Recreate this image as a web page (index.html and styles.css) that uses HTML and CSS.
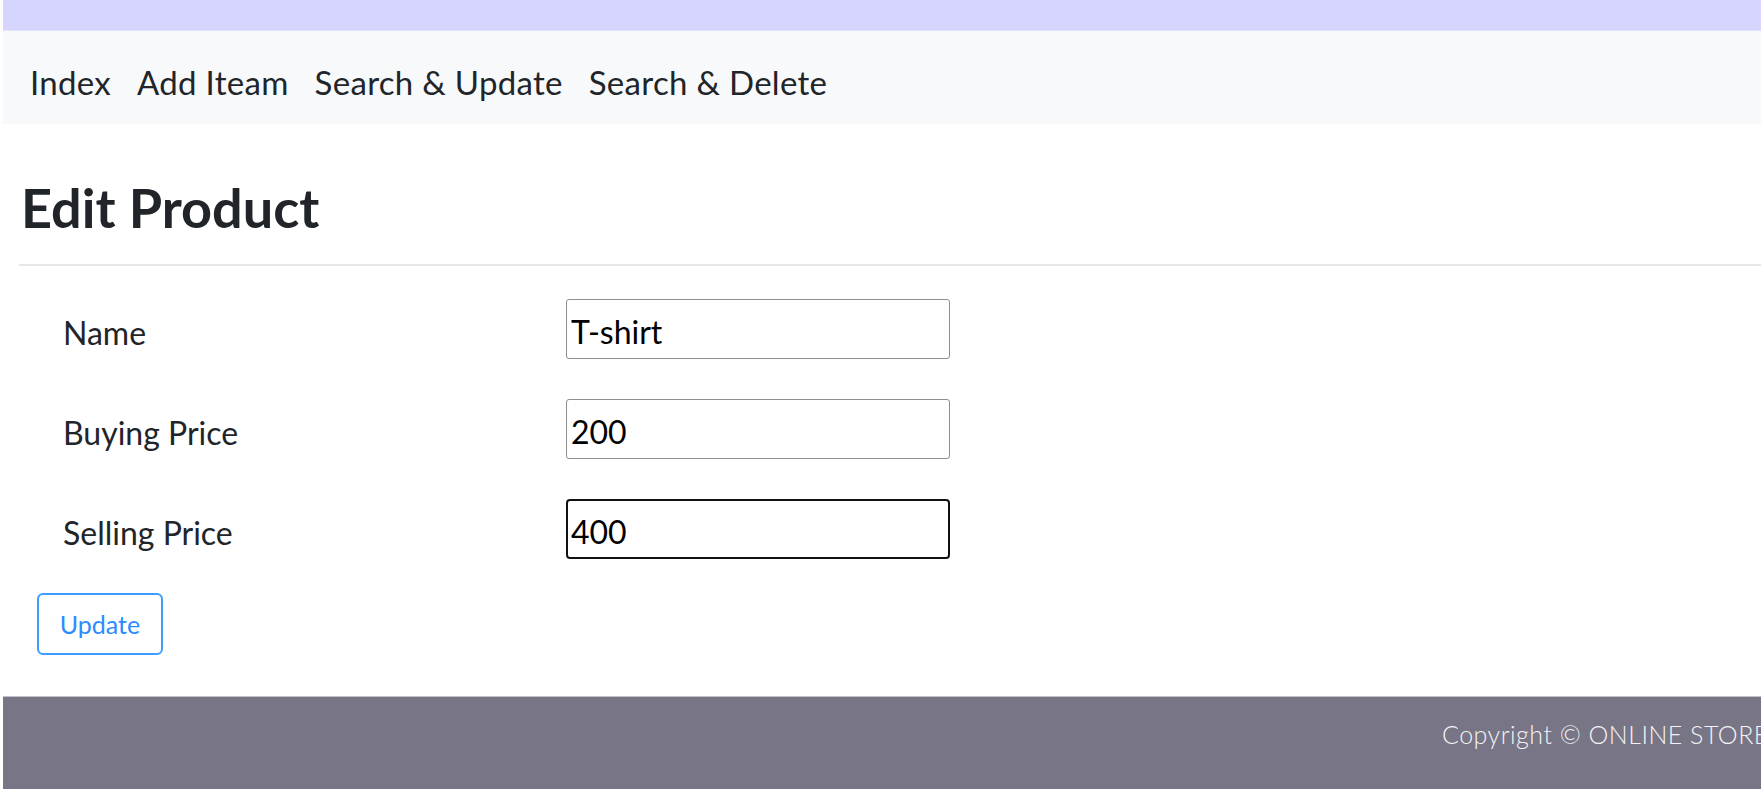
FILE: index.html
```html
<!DOCTYPE html>
<html lang="en">
<head>
<meta charset="utf-8">
<title>Edit Product</title>
<link rel="stylesheet" href="styles.css">
</head>
<body>
<div class="page">
  <div class="topband"></div>
  <nav class="navbar">
    <a class="nav-link" href="#">Index</a>
    <a class="nav-link" href="#">Add Iteam</a>
    <a class="nav-link" href="#">Search &amp; Update</a>
    <a class="nav-link" href="#">Search &amp; Delete</a>
  </nav>
  <main class="content">
    <h1 class="title">Edit Product</h1>
    <hr class="divider">
    <form class="form">
      <div class="row">
        <label class="label">Name</label>
        <input class="field" type="text" value="T-shirt">
      </div>
      <div class="row">
        <label class="label">Buying Price</label>
        <input class="field" type="text" value="200">
      </div>
      <div class="row">
        <label class="label">Selling Price</label>
        <input class="field focused" type="text" value="400">
      </div>
      <button class="btn" type="button">Update</button>
    </form>
  </main>
  <footer class="footer">
    <span class="copy">Copyright © ONLINE STORE</span>
  </footer>
</div>
</body>
</html>
```
FILE: styles.css
```css
html, body {
  margin: 0;
  padding: 0;
  overflow: hidden;
  background: #ffffff;
}
body {
  font-family: "Lato", "Noto Sans", sans-serif;
  color: #212529;
}
.page {
  margin-left: 3px;
  height: 789px;
  display: flex;
  flex-direction: column;
}
.topband {
  height: 30px;
  background: #d5d5fd;
  border-bottom: 1px solid #e4e4fb;
}
.navbar {
  height: 93px;
  box-sizing: border-box;
  background: #f8f9fa;
  display: flex;
  align-items: center;
  padding-left: 27px;
  padding-top: 9px;
  gap: 26px;
}
.nav-link {
  font-size: 33px;
  color: #212529;
  text-decoration: none;
  line-height: 1;
  letter-spacing: 0.3px;
}
.content {
  padding-left: 16px;
  flex: 1;
}
.title {
  margin: 0;
  padding-top: 52px;
  font-size: 54px;
  font-weight: 700;
  line-height: 64px;
  padding-left: 2px;
}
.divider {
  margin: 24px 0 0 0;
  border: 0;
  height: 2px;
  background: #e7e7ea;
}
.form {
  padding-top: 33px;
  display: flex;
  flex-direction: column;
}
.row {
  display: flex;
  align-items: center;
  height: 60px;
  margin-bottom: 40px;
}
.row:nth-child(3) {
  margin-bottom: 34px;
}
.label {
  width: 547px;
  padding-left: 44px;
  padding-top: 6px;
  box-sizing: border-box;
  font-size: 32px;
  color: #212529;
}
.field {
  width: 384px;
  height: 60px;
  box-sizing: border-box;
  border: 1px solid #8f8f8f;
  border-radius: 3px;
  padding: 5px 4px 0 4px;
  font-family: "Lato", "Noto Sans", sans-serif;
  font-size: 32px;
  color: #000;
  background: #fff;
}
.field.focused {
  border: 2px solid #111;
  border-radius: 4px;
  padding: 5px 3px 0 3px;
}
.btn {
  align-self: flex-start;
  margin-left: 18px;
  width: 126px;
  height: 62px;
  background: #fff;
  border: 2px solid #3d9cff;
  border-radius: 6px;
  color: #2b8cff;
  font-family: "Lato", "Noto Sans", sans-serif;
  font-size: 25px;
  padding: 0;
}
.footer {
  height: 93px;
  background: #787586;
  border-top: 1px solid #c3c2cb;
  box-sizing: border-box;
  padding-left: 1439px;
  padding-top: 22px;
  white-space: nowrap;
  overflow: hidden;
}
.copy {
  color: #f3f3f5;
  font-size: 25px;
  font-weight: 300;
  letter-spacing: 0.5px;
}
```
